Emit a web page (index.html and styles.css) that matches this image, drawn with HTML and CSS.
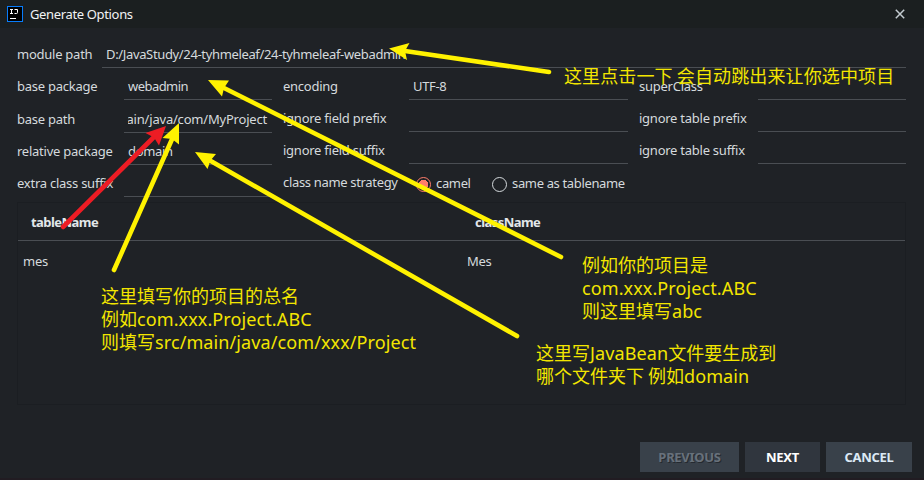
FILE: index.html
```html
<!DOCTYPE html>
<html lang="en">
<head>
<meta charset="utf-8">
<title>Generate Options</title>
<link rel="stylesheet" href="styles.css">
</head>
<body>
<div class="dialog">
  <header class="titlebar">
    <svg class="logo" width="16" height="16" viewBox="0 0 16 16"><rect x=".5" y=".5" width="15" height="15" fill="#000" stroke="#087cfa"/><path d="M3 3.500h3M4.500 3.500v4M3 7.500h3M7.500 3.500h3v3q0 1-1 1H7.500M3 12.500h6" fill="none" stroke="#fff"/></svg>
    <h1 class="title">Generate Options</h1>
    <svg class="close" width="10" height="10" viewBox="0 0 10 10"><path d="M.8.8l8.400 8.400M9.200.8L.8 9.200" stroke="#c3cbd0" stroke-width="1.5"/></svg>
  </header>
  <main class="content">
    <div class="row module"><label>module path</label><div class="field"><span class="path">D:/JavaStudy/24-tyhmeleaf/24-tyhmeleaf-webadmin</span></div></div>
    <div class="columns">
      <section class="left">
        <div class="row"><label>base package</label><div class="field tight">webadmin</div></div>
        <div class="row tall"><label>base path</label><div class="field clipped"><span>src/main/java/com/MyProject</span></div></div>
        <div class="row"><label>relative package</label><div class="field">domain</div></div>
        <div class="row"><label>extra class suffix</label><div class="field"></div></div>
      </section>
      <section class="middle">
        <div class="row"><label>encoding</label><div class="field">UTF-8</div></div>
        <div class="row"><label>ignore field prefix</label><div class="field"></div></div>
        <div class="row"><label>ignore field suffix</label><div class="field"></div></div>
        <div class="row radios"><label>class name strategy</label>
          <span class="radio on"></span><span class="camel">camel</span>
          <span class="radio"></span><span class="same">same as tablename</span>
        </div>
      </section>
      <section class="right">
        <div class="row"><label>superClass</label><div class="field"></div></div>
        <div class="row"><label>ignore table prefix</label><div class="field"></div></div>
        <div class="row"><label>ignore table suffix</label><div class="field"></div></div>
      </section>
    </div>
    <div class="table">
      <div class="thead"><span>tableName</span><span>className</span></div>
      <div class="tr"><span>mes</span><span>Mes</span></div>
    </div>
  </main>
  <footer class="actions">
    <button class="previous">PREVIOUS</button><button class="next">NEXT</button><button class="cancel">CANCEL</button>
  </footer>
  <svg class="arrows" width="924" height="480" viewBox="0 0 924 480">
    <g stroke="#fff200" fill="#fff200" stroke-width="4.600" stroke-linecap="round">
      <path d="M549 72L405 51"/><path stroke="none" d="M389 48.500L409.500 43L405 51L407 60Z"/>
      <path d="M561 257L223 87.500"/><path stroke="none" d="M208 80L229 80.500L224 88L222 96.500Z"/>
      <path d="M517 336L209 160"/><path stroke="none" d="M195 152L216 154L210.500 160.500L207.500 169Z"/>
      <path d="M114 270L173 137"/><path stroke="none" d="M179 123L179 144.500L172 139L162.500 138Z"/>
    </g>
    <g stroke="#ed1c24" fill="#ed1c24" stroke-width="4.600" stroke-linecap="round"><path d="M63 227L155 136"/><path stroke="none" d="M166 126L159 145.500L154 137.500L145.500 133Z"/></g>
  </svg>
  <p class="note note-module">这里点击一下 会自动跳出来让你选中项目</p>
  <p class="note note-path">这里填写你的项目的总名<br>例如<span>com.xxx.Project.ABC</span><br>则填写<span>src/main/java/com/xxx/Project</span></p>
  <p class="note note-package">例如你的项目是<br><span>com.xxx.Project.ABC</span><br>则这里填写<span>abc</span></p>
  <p class="note note-domain">这里写<span>JavaBean</span>文件要生成到<br>哪个文件夹下 例如<span>domain</span></p>
</div>
</body>
</html>
```
FILE: styles.css
```css
* { box-sizing: border-box; }
body { margin: 0; background: #1f2226; }
.dialog {
  position: relative;
  display: flex;
  flex-direction: column;
  width: 924px;
  height: 480px;
  overflow: hidden;
  background: #1f2226;
  border-bottom: 2px solid #211c22;
  color: #d5dadd;
  font: 13px/18px "Noto Sans", "Noto Sans CJK SC", sans-serif;
  letter-spacing: -.25px;
  white-space: nowrap;
}
.titlebar { display: flex; align-items: center; height: 28px; padding: 0 19px 0 7px; background: #1b1f20; }
.title { flex: 1; margin: 0 0 0 7px; font-size: 13px; line-height: 17px; font-weight: 400; letter-spacing: -.35px; color: #f1f3f4; }
.content { display: flex; flex-direction: column; padding: 8px 18px 0 17px; }
.row { display: flex; height: 32px; }
.row.tall { height: 33px; padding-top: 1px; }
.row label { flex: none; padding-top: 9px; }
.field { flex: 1; height: 100%; padding: 9px 4px 0; border-bottom: 1px solid #4a4e53; letter-spacing: -.35px; }
.tight { letter-spacing: -.55px; }
.module label { width: 85px; }
.columns { display: grid; grid-template-columns: 255px 345px 267px; column-gap: 11px; height: 134px; }
.left label { width: 107px; }
.middle label { width: 126px; }
.right label { width: 119px; }
.clipped { display: flex; justify-content: flex-end; overflow: hidden; }
.clipped span { display: flex; justify-content: flex-end; width: 140px; padding-right: 1px; overflow: hidden; letter-spacing: -.2px; }
.radio { flex: none; width: 15px; height: 15px; margin: 13px 5px 0 7px; border: 1px solid #d5dadd; border-radius: 50%; }
.radio.on { border-color: #ff7d6b; background: radial-gradient(circle, #ff7d6b 4.5px, transparent 5px); }
.radios label { letter-spacing: -.33px; }
.camel, .same { padding-top: 10px; letter-spacing: -.35px; }
.camel { width: 49px; }
.table { height: 203px; border: 1px solid #1b1e22; }
.thead, .tr { display: grid; grid-template-columns: 444px 1fr; }
.thead { height: 38px; padding: 10px 0 0 13px; border-bottom: 1px solid #4a4e53; font-weight: 700; letter-spacing: -.55px; color: #e2e7e9; }
.tr { padding: 11px 0 0 5px; letter-spacing: -.25px; }
.actions { display: flex; gap: 6px; justify-content: flex-end; margin-top: 37px; padding-right: 12px; }
.actions button { height: 30px; padding: 0; border: 0; background: #39414a; color: #dce9f5; font: 700 13px/30px "Noto Sans", sans-serif; letter-spacing: -.3px; }
.actions .previous { width: 99px; color: #68717b; text-shadow: 1px 1px #252a30; }
.actions .next { width: 75px; background: #30363e; color: #fff; }
.actions .cancel { width: 86px; }
.arrows { position: absolute; inset: 0; }
.note { position: absolute; margin: 0; color: #f3e600; font: 18px/23px "Noto Sans CJK SC", sans-serif; letter-spacing: 0; }
.note span { font-family: "Noto Sans", sans-serif; line-height: 1; letter-spacing: .1px; }
.note-module { left: 564px; top: 64px; letter-spacing: .12px; }
.note-path { left: 101px; top: 284px; }
.note-package { left: 582px; top: 253px; }
.note-domain { left: 536px; top: 341px; }
```
